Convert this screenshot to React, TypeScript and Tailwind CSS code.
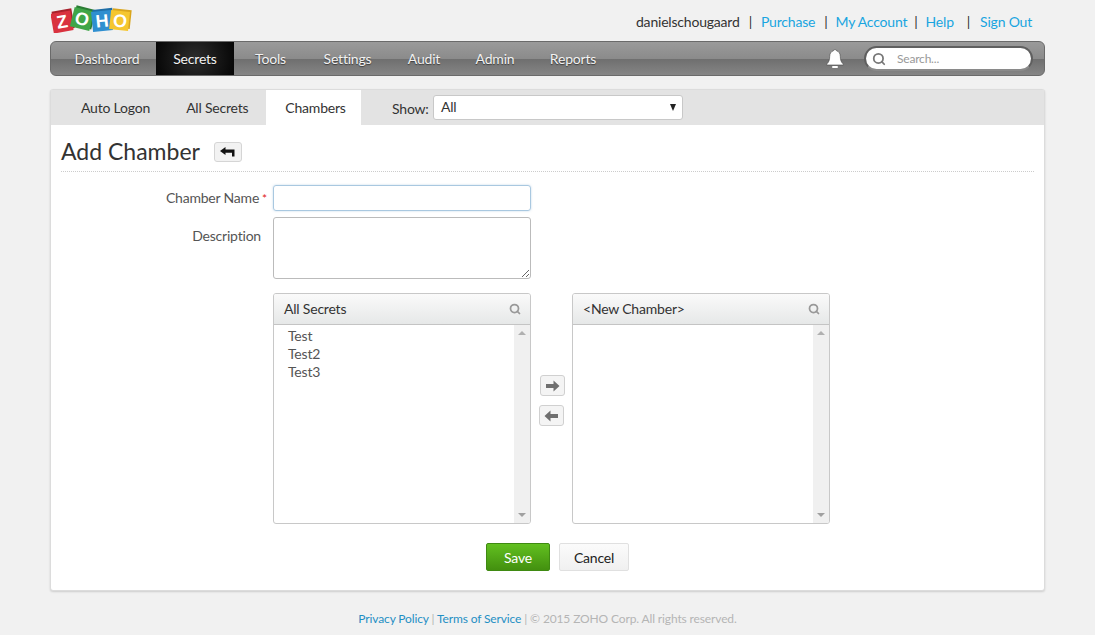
import React from 'react';
import { Search } from 'lucide-react';

const NAV_ITEMS = [
  { label: 'Dashboard', width: 'w-[98px]' },
  { label: 'Secrets', width: 'w-[78px]', active: true },
  { label: 'Tools', width: 'w-[73px]' },
  { label: 'Settings', width: 'w-[81px]' },
  { label: 'Audit', width: 'w-[72px]' },
  { label: 'Admin', width: 'w-[70px]' },
  { label: 'Reports', width: 'w-[86px]' },
];

function Logo() {
  const cubes = [
    { x: 1, y: 9, w: 20, fill: '#d9323f', side: '#a8212c', rot: -10, letter: 'Z' },
    { x: 21, y: 6, w: 20, fill: '#3fa548', side: '#2b7c34', rot: 14, letter: 'O' },
    { x: 41, y: 8, w: 20, fill: '#2f8fd0', side: '#1f6ea6', rot: -6, letter: 'H' },
    { x: 59, y: 8, w: 19, fill: '#f5c62f', side: '#d9a51c', rot: 6, letter: 'O' },
  ];
  return (
    <svg width="82" height="30" viewBox="0 0 82 30">
      {cubes.map((c, i) => (
        <g key={i} transform={`rotate(${c.rot} ${c.x + 10} ${c.y + 10})`}>
          <rect x={c.x + 1.5} y={c.y - 2} width={c.w} height={c.w} fill={c.side} />
          <rect x={c.x} y={c.y} width={c.w} height={c.w} fill={c.fill} />
          <text
            x={c.x + 10}
            y={c.y + 16}
            textAnchor="middle"
            fontSize="18"
            fontWeight="700"
            fontFamily="Liberation Sans, sans-serif"
            fill="#fff"
          >
            {c.letter}
          </text>
        </g>
      ))}
    </svg>
  );
}

function Bell() {
  return (
    <svg width="20" height="22" viewBox="0 0 20 22">
      <path
        d="M10 1.500c.9 0 1.500.6 1.600 1.300 2.600.7 3.600 3 3.700 5.600.1 3.400.6 5.600 3 7.600v1H1.700v-1c2.400-2 2.900-4.200 3-7.600.1-2.600 1.100-4.900 3.700-5.600.1-.7.700-1.300 1.600-1.300z"
        fill="#fff"
        stroke="#444"
        strokeWidth="0.6"
      />
      <rect x="7" y="18" width="6" height="2" rx="1" fill="#fff" />
    </svg>
  );
}

function Arrow({ left, color = '#6f6f6f' }: { left?: boolean; color?: string }) {
  return (
    <svg width="15" height="12" viewBox="0 0 15 12" className={left ? 'rotate-180' : ''}>
      <path d="M1 4h7.500V.5L14.500 6l-6 5.500V8H1z" fill={color} />
    </svg>
  );
}

function ListBox({ title, items }: { title: string; items: string[] }) {
  return (
    <div className="w-[258px] h-[231px] flex flex-col border border-[#c8c8c8] rounded-[3px] overflow-hidden">
      <div className="h-[31px] shrink-0 flex items-center justify-between pl-[10px] pr-[9px] pb-[1px] bg-gradient-to-b from-[#fafafa] to-[#e6e8e8] border-b border-[#c4c4c4] text-[14px] text-[#333]">
        <span>{title}</span>
        <Search className="w-[12px] h-[12px] text-[#999]" strokeWidth={3.500} />
      </div>
      <div className="flex-1 flex min-h-0">
        <div className="flex-1 pt-[2px] pl-[14px] text-[14px] leading-[18px] text-[#555]">
          {items.map((item) => (
            <div key={item}>{item}</div>
          ))}
        </div>
        <div className="w-[16px] bg-[#f0f0f0] flex flex-col items-center justify-between py-[6px]">
          <div className="w-0 h-0 border-x-[4px] border-x-transparent border-b-[4px] border-b-[#b0b0b0]" />
          <div className="w-0 h-0 border-x-[4px] border-x-transparent border-t-[4px] border-t-[#a0a0a0]" />
        </div>
      </div>
    </div>
  );
}

export default function App() {
  return (
    <div className="min-h-screen bg-[#f1f1f1] font-['Lato',sans-serif] tracking-[-0.2px]">
      <div className="w-[995px] mx-auto">
        {/* top bar */}
        <div className="h-[41px] flex items-start justify-between">
          <div className="pt-[3px] pl-[1px]">
            <Logo />
          </div>
          <div className="flex items-center h-[43px] pr-[13px] text-[14px] text-[#333]">
            <span>danielschougaard</span>
            <span className="mx-[9px]">|</span>
            <a className="text-[#19a5e0]">Purchase</a>
            <span className="ml-[9px] mr-[8px]">|</span>
            <a className="text-[#19a5e0]">My Account</a>
            <span className="ml-[7px] mr-[8px]">|</span>
            <a className="text-[#19a5e0]">Help</a>
            <span className="ml-[13px] mr-[10px]">|</span>
            <a className="text-[#19a5e0]">Sign Out</a>
          </div>
        </div>

        {/* main nav */}
        <div className="h-[35px] flex items-stretch pl-[7px] rounded-[6px] border border-[#6a6a6a] bg-[linear-gradient(to_bottom,#9a9a9a_0%,#8b8b8b_50%,#6f6f6f_52%,#858585_100%)]">
          {NAV_ITEMS.map((item) => (
            <div
              key={item.label}
              className={`${item.width} flex items-center justify-center text-[14px] text-[#f2f2f2] [text-shadow:0_1px_1px_rgba(0,0,0,0.5)] ${
                item.active ? 'bg-[radial-gradient(circle,#2c2c2c_0%,#050505_100%)]' : ''
              }`}
            >
              {item.label}
            </div>
          ))}
          <div className="ml-auto flex items-center pr-[11px]">
            <div className="mr-[19px] mt-[1px]">
              <Bell />
            </div>
            <div className="w-[169px] h-[25px] rounded-full bg-white border-2 border-[#5f5f5f] border-b-[#8a8a8a] flex items-center pl-[6px] text-[12px] text-[#999]">
              <Search className="w-[14px] h-[14px] text-[#777] mr-[11px]" strokeWidth={3} />
              <span>Search...</span>
            </div>
          </div>
        </div>

        {/* panel */}
        <div className="mt-[13px] h-[502px] bg-white rounded-[3px] border border-[#dcdcdc] shadow-[0_1px_2px_rgba(0,0,0,0.15)]">
          <div className="h-[35px] bg-[#e3e3e3] flex items-stretch text-[14px] text-[#333]">
            <div className="w-[215px] flex items-center pb-[1px]">
              <span className="ml-[30px]">Auto Logon</span>
              <span className="ml-[36px]">All Secrets</span>
            </div>
            <div className="w-[95px] bg-white flex items-center justify-center pl-[4px] pb-[1px]">Chambers</div>
            <div className="flex items-center pl-[31px]">
              <span className="w-[41px] mt-[1px]">Show:</span>
              <div className="w-[250px] h-[25px] bg-white rounded-[3px] border border-[#c8c8c8] flex items-center justify-between pl-[7px] pr-[6px]">
                <span className="-mt-[3px]">All</span>
                <span className="w-0 h-0 border-x-[3.500px] border-x-transparent border-t-[7px] border-t-[#222]" />
              </div>
            </div>
          </div>

          <div className="mx-[10px] h-[47px] pt-[7px] flex items-center border-b border-dotted border-[#ccc] text-[#333]">
            <h1 className="text-[23px] font-normal tracking-normal">Add Chamber</h1>
            <button className="ml-[14px] w-[28px] h-[20px] flex items-center justify-center rounded-[3px] border border-[#d5d5d5] bg-[#f2f2f2]">
              <svg width="15" height="10" viewBox="0 0 15 10">
                <path d="M0 4L5.500 0v2.500H14.500V9.500H12V5.800H5.500V8z" fill="#111" />
              </svg>
            </button>
          </div>

          <div className="mt-[13px] flex flex-col">
            <div className="flex items-center">
              <label className="w-[222px] pr-[6px] pb-[2px] text-right text-[14px] text-[#555] whitespace-nowrap">
                Chamber Name<span className="text-[#e02020] ml-[3px] text-[12px]">*</span>
              </label>
              <input className="w-[258px] h-[26px] rounded-[3px] border border-[#a9c8e0] shadow-[0_0_2px_rgba(120,170,210,0.5)] outline-none" />
            </div>
            <div className="mt-[6px] flex items-start">
              <label className="w-[222px] pr-[12px] pt-[8px] text-right text-[14px] text-[#555]">Description</label>
              <textarea className="w-[258px] h-[62px] rounded-[3px] border border-[#bbb] outline-none block" />
            </div>
            <div className="mt-[14px] ml-[222px] flex items-start">
              <ListBox title="All Secrets" items={['Test', 'Test2', 'Test3']} />
              <div className="w-[41px] pt-[82px] flex flex-col items-center gap-[9px]">
                <button className="w-[25px] h-[21px] ml-[1px] flex items-center justify-center rounded-[3px] border border-[#d0d0d0] bg-[#f4f4f4]">
                  <Arrow />
                </button>
                <button className="w-[25px] h-[21px] -ml-[1px] flex items-center justify-center rounded-[3px] border border-[#d0d0d0] bg-[#f4f4f4]">
                  <Arrow left />
                </button>
              </div>
              <ListBox title="<New Chamber>" items={[]} />
            </div>
            <div className="mt-[19px] ml-[435px] flex items-stretch gap-[9px] h-[28px] text-[14px]">
              <button className="w-[64px] rounded-[2px] border border-[#3f8a12] bg-gradient-to-b from-[#62c020] to-[#43900f] text-white">
                Save
              </button>
              <button className="w-[70px] rounded-[2px] border border-[#e0e0e0] bg-gradient-to-b from-[#fbfbfb] to-[#f0f0f0] text-[#222]">
                Cancel
              </button>
            </div>
          </div>
        </div>

        {/* footer */}
        <div className="mt-[19px] text-center text-[12px] tracking-[-0.13px] text-[#b5b5b5]">
          <a className="text-[#1f8fc4]">Privacy Policy</a>
          <span> | </span>
          <a className="text-[#1f8fc4]">Terms of Service</a>
          <span> | © 2015 ZOHO Corp. All rights reserved.</span>
        </div>
      </div>
    </div>
  );
}
